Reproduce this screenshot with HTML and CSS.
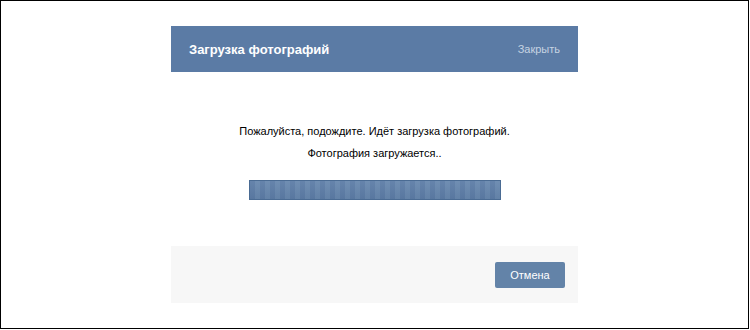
FILE: index.html
```html
<!DOCTYPE html>
<html lang="ru">
<head>
    <meta charset="UTF-8">
    <title>Загрузка фотографий</title>
    <link rel="stylesheet" href="styles.css">
</head>
<body>
    <div class="frame">
        <!-- окно загрузки -->
        <div class="box">
            <div class="box-header">
                <span class="box-title">Загрузка фотографий</span>
                <span class="box-close">Закрыть</span>
            </div>

            <div class="box-body">
                <div class="box-text">Пожалуйста, подождите. Идёт загрузка фотографий.</div>
                <div class="box-text">Фотография загружается..</div>
                <div class="progress"></div>
            </div>

            <div class="box-footer">
                <button class="btn">Отмена</button>
            </div>
        </div>
    </div>
</body>
</html>
```

FILE: styles.css
```css
body {
    margin: 0;
    font-family: "Liberation Sans", Arial, sans-serif;
    background: #fff;
}

.frame {
    width: 747px;
    height: 302px; /* + 25px сверху = 327 */
    border: 1px solid #000;
    padding-top: 25px;
}

.box {
    width: 407px;
    margin: 0 auto;
}

.box-header {
    height: 46px;
    background-color: #5b7ba5;
    display: flex;
    justify-content: space-between;
    align-items: center;
    padding: 0 18px;
}

.box-title {
    color: #fff;
    font-weight: bold;
    font-size: 13px;
}

.box-close {
    color: #c6d3e2;
    font-size: 11px;
}

.box-body {
    height: 174px;
    padding-top: 48px;
    box-sizing: border-box;
    display: flex;
    flex-direction: column;
    align-items: center;
}

.box-text {
    font-size: 11px;
    line-height: 22px;
    color: #000;
}

.progress {
    width: 250px;
    height: 18px;
    margin-top: 16px;
    border: 1px solid #4a6b93;
    background:
        linear-gradient(rgba(255, 255, 255, 0.06), rgba(0, 0, 0, 0.04)),
        repeating-linear-gradient(90deg, #5c7ca6 0, #5c7ca6 5px, #6787ae 5px, #6787ae 10px);
}

.box-footer {
    height: 57px;
    background-color: #f7f7f7;
    display: flex;
    justify-content: flex-end;
    align-items: center;
    padding: 0 13px;
}

.btn {
    width: 70px;
    height: 26px;
    border: none;
    border-radius: 2px;
    background-color: #6383a8;
    color: #fff;
    font-family: "Liberation Sans", Arial, sans-serif;
    font-size: 11px;
    padding: 0;
}
```
